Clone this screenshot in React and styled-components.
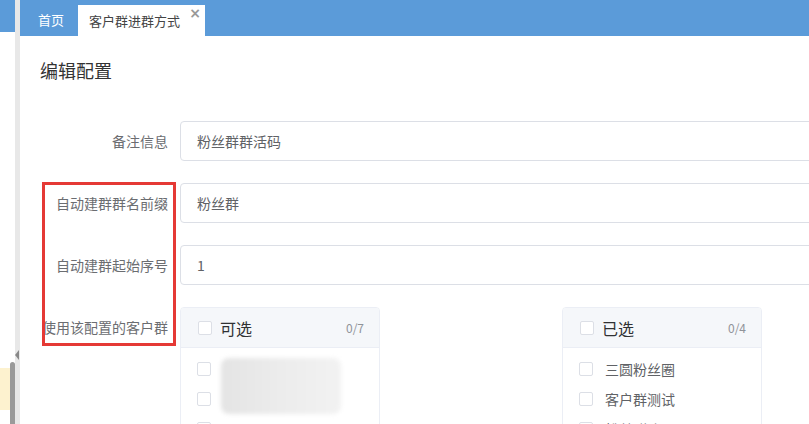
import React from "react";
import styled, { createGlobalStyle } from "styled-components";

const Global = createGlobalStyle`
  html, body { margin: 0; padding: 0; background: #fff; overflow: hidden; }
  body { font-family: "Noto Sans CJK SC", "Noto Sans", "Liberation Sans", sans-serif; }
  * { box-sizing: border-box; }
`;

const Page = styled.div`
  display: flex;
  width: 809px;
  height: 424px;
  overflow: hidden;
`;

const Sidebar = styled.div`
  position: relative;
  width: 15px;
  flex: none;
  display: flex;
  flex-direction: column;
`;

const SideTop = styled.div`
  height: 32px;
  background: #5b9bd9;
`;

const SideNote = styled.div`
  position: absolute;
  left: 0;
  top: 368px;
  width: 12px;
  height: 42px;
  background: #fdf2cf;
`;

const SideScroll = styled.div`
  position: absolute;
  left: 10px;
  top: 362px;
  width: 5px;
  height: 70px;
  border-radius: 3px 3px 0 0;
  background: #9a9a9a;
`;

const Divider = styled.div`
  position: relative;
  width: 5px;
  flex: none;
  background: #e8e8e8;
`;

const Arrow = styled.div`
  position: absolute;
  left: 0;
  top: 350px;
  width: 0;
  height: 0;
  border-top: 5px solid transparent;
  border-bottom: 5px solid transparent;
  border-right: 4px solid #888;
`;

const Main = styled.div`
  flex: 1;
  min-width: 0;
  display: flex;
  flex-direction: column;
`;

const TabBar = styled.div`
  height: 36px;
  background: #5b9bd9;
  display: flex;
  align-items: flex-end;
  padding-left: 6px;
`;

const Tab = styled.div`
  position: relative;
  height: ${(p) => (p.$active ? "31px" : "36px")};
  padding: ${(p) => (p.$active ? "0 25px 0 11px" : "0 12px")};
  display: flex;
  align-items: center;
  font-size: 13px;
  color: ${(p) => (p.$active ? "#444" : "#fff")};
  background: ${(p) => (p.$active ? "#fff" : "transparent")};
  width: ${(p) => (p.$active ? "127px" : "auto")};
  margin-right: ${(p) => (p.$active ? "0" : "2px")};
  line-height: 1;
`;

const TabText = styled.span`
  position: relative;
  top: ${(p) => p.$dy || 0}px;
`;

const Close = styled.span`
  position: absolute;
  right: 4px;
  top: 1px;
  font-size: 14px;
  font-weight: bold;
  color: #999;
  font-family: "DejaVu Sans", sans-serif;
`;

const Content = styled.div`
  position: relative;
  flex: 1;
  padding: 22px 0 0 20px;
`;

const Title = styled.h2`
  margin: 0;
  font-size: 18px;
  font-weight: normal;
  color: #333;
  line-height: 24px;
`;

const Form = styled.div`
  position: relative;
  margin-top: 39px;
  display: flex;
  flex-direction: column;
  gap: 22px;
`;

const Row = styled.div`
  display: flex;
  align-items: ${(p) => (p.$top ? "flex-start" : "center")};
`;

const Label = styled.label`
  width: 140px;
  flex: none;
  padding-right: 12px;
  text-align: right;
  font-size: 14px;
  color: #6b6d71;
  white-space: nowrap;
  line-height: ${(p) => (p.$top ? "40px" : "normal")};
`;

const Input = styled.div`
  flex: none;
  width: 700px;
  height: 40px;
  border: 1px solid #dcdfe6;
  border-radius: 4px;
  padding-left: 16px;
  display: flex;
  align-items: center;
  font-size: 14px;
  color: #606266;
`;

const Transfer = styled.div`
  display: flex;
  gap: 182px;
`;

const Panel = styled.div`
  width: 200px;
  height: 300px;
  border: 1px solid #ebeef5;
  border-radius: 4px;
  overflow: hidden;
`;

const PanelHead = styled.div`
  height: 40px;
  background: #f5f7fa;
  border-bottom: 1px solid #ebeef5;
  display: flex;
  align-items: center;
  padding: 0 15px 0 17px;
`;

const Check = styled.span`
  width: 14px;
  height: 14px;
  flex: none;
  border: 1px solid #dcdfe6;
  border-radius: 2px;
  background: #fff;
`;

const HeadTitle = styled.span`
  margin-left: 8px;
  font-size: 16px;
  color: #303133;
  flex: 1;
`;

const Count = styled.span`
  font-size: 12px;
  color: #909399;
`;

const List = styled.div`
  padding-top: 6px;
  position: relative;
`;

const Item = styled.div`
  height: 30px;
  display: flex;
  align-items: center;
  padding-left: 16px;
  font-size: 14px;
  color: #606266;
  gap: 12px;
`;

const Blur = styled.div`
  position: absolute;
  left: 40px;
  top: 10px;
  width: 120px;
  height: 56px;
  border-radius: 8px;
  background: linear-gradient(90deg, #e4e4e4 0%, #ececec 50%, #f2f2f2 100%);
  filter: blur(2px);
`;

const Highlight = styled.div`
  position: absolute;
  left: 22px;
  top: 146px;
  width: 134px;
  height: 164px;
  border: 3px solid #e53935;
  pointer-events: none;
`;

export default function App() {
  return (
    <>
      <Global />
      <Page>
        <Sidebar>
          <SideTop />
          <SideNote />
          <SideScroll />
        </Sidebar>
        <Divider>
          <Arrow />
        </Divider>
        <Main>
          <TabBar>
            <Tab>
              <TabText $dy={1}>首页</TabText>
            </Tab>
            <Tab $active>
              <TabText>客户群进群方式</TabText>
              <Close>×</Close>
            </Tab>
          </TabBar>
          <Content>
            <Title>编辑配置</Title>
            <Form>
              <Row>
                <Label>备注信息</Label>
                <Input>粉丝群群活码</Input>
              </Row>
              <Row>
                <Label>自动建群群名前缀</Label>
                <Input>粉丝群</Input>
              </Row>
              <Row>
                <Label>自动建群起始序号</Label>
                <Input>1</Input>
              </Row>
              <Row $top>
                <Label $top>使用该配置的客户群</Label>
                <Transfer>
                  <Panel>
                    <PanelHead>
                      <Check />
                      <HeadTitle>可选</HeadTitle>
                      <Count>0/7</Count>
                    </PanelHead>
                    <List>
                      <Item><Check /></Item>
                      <Item><Check /></Item>
                      <Item><Check /></Item>
                      <Blur />
                    </List>
                  </Panel>
                  <Panel>
                    <PanelHead>
                      <Check />
                      <HeadTitle>已选</HeadTitle>
                      <Count>0/4</Count>
                    </PanelHead>
                    <List>
                      <Item><Check />三圆粉丝圈</Item>
                      <Item><Check />客户群测试</Item>
                      <Item><Check />粉丝群聊</Item>
                    </List>
                  </Panel>
                </Transfer>
              </Row>
            </Form>
            <Highlight />
          </Content>
        </Main>
      </Page>
    </>
  );
}
